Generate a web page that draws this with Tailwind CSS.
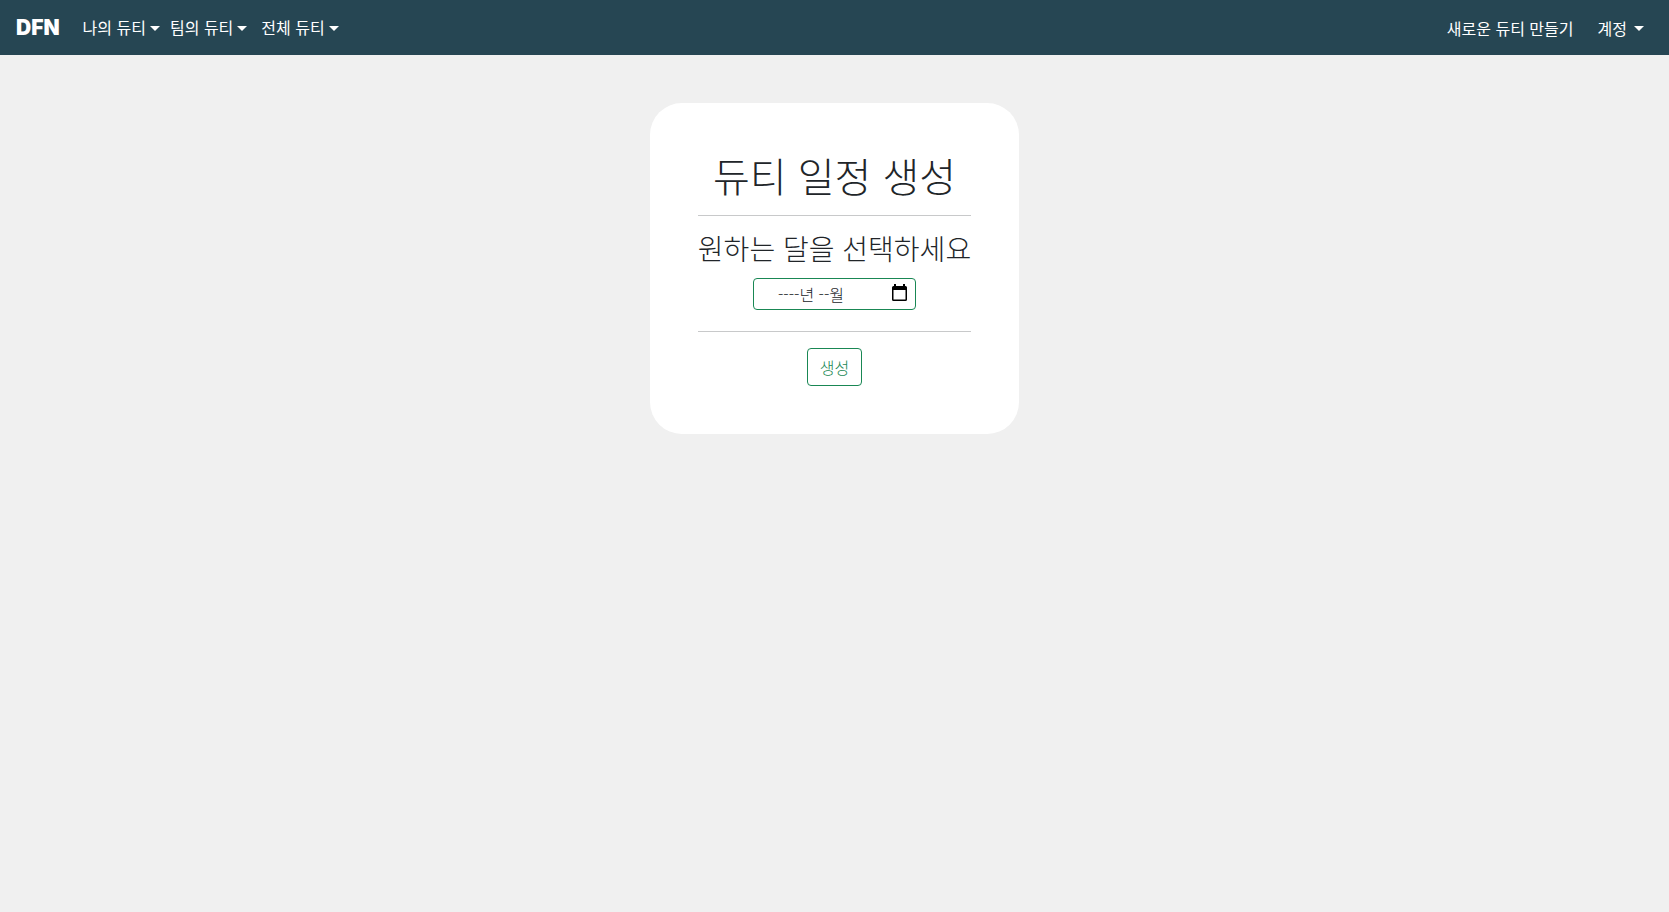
<!DOCTYPE html>
<html lang="ko">
<head>
<meta charset="utf-8">
<meta name="viewport" content="width=device-width, initial-scale=1">
<title>DFN</title>
<script src="https://cdn.jsdelivr.net/npm/@tailwindcss/browser@4"></script>
</head>
<body class="min-h-screen bg-[#f0f0f0] font-['Noto_Sans_CJK_KR',sans-serif] text-base text-[#212529]">
<header class="flex h-[55px] items-center justify-between bg-[#264653] pl-4 pr-[25px] text-white">
  <nav class="flex items-center">
    <a href="#" class="mr-[23px] font-['Inter',sans-serif] text-[21px] font-black">DFN</a>
    <div class="flex items-center pb-0.5">
      <button type="button" class="mr-[10px] flex items-center gap-1">나의 듀티<svg class="mt-1 h-[5px] w-[10px]" viewBox="0 0 10 5" fill="currentColor" aria-hidden="true"><path d="M0 0h10L5 5z"/></svg></button>
      <button type="button" class="mr-[14px] flex items-center gap-1">팀의 듀티<svg class="mt-1 h-[5px] w-[10px]" viewBox="0 0 10 5" fill="currentColor" aria-hidden="true"><path d="M0 0h10L5 5z"/></svg></button>
      <button type="button" class="flex items-center gap-1">전체 듀티<svg class="mt-1 h-[5px] w-[10px]" viewBox="0 0 10 5" fill="currentColor" aria-hidden="true"><path d="M0 0h10L5 5z"/></svg></button>
    </div>
  </nav>
  <nav class="flex items-center gap-6 pt-px">
    <a href="#">새로운 듀티 만들기</a>
    <button type="button" class="flex items-center gap-[7px]">계정<svg class="h-[5px] w-[10px]" viewBox="0 0 10 5" fill="currentColor" aria-hidden="true"><path d="M0 0h10L5 5z"/></svg></button>
  </nav>
</header>
<main class="flex justify-center pt-12">
  <form class="flex flex-col items-center rounded-[32px] bg-white p-12">
    <h1 class="text-[40px] leading-[48px] font-light">듀티 일정 생성</h1>
    <hr class="my-4 w-full border-[#c8c9ca]">
    <label for="month" class="text-[28px] leading-[32px] font-light">원하는 달을 선택하세요</label>
    <div class="mt-[14px] flex h-8 w-[163px] items-center rounded border border-[#198754] pr-2">
      <input id="month" type="text" value="----년 --월" class="min-w-0 flex-1 pl-6 text-base leading-6 font-light outline-none">
      <button type="button" aria-label="달력 열기" class="mb-1"><svg class="h-[17px] w-[15px]" viewBox="0 0 15 17" aria-hidden="true"><path fill="#000" fill-rule="evenodd" d="M2 0h2v2h7V0h2v2h.5A1.5 1.5 0 0 1 15 3.500v12a1.500 1.500 0 0 1-1.500 1.500h-12A1.500 1.500 0 0 1 0 15.500v-12A1.500 1.500 0 0 1 1.500 2H2zM1.500 6v9.500h12V6z"/></svg></button>
    </div>
    <hr class="mt-[21px] mb-4 w-full border-[#c8c9ca]">
    <button type="submit" class="h-[38px] rounded border border-[#198754] px-3 text-base leading-6 font-light text-[#198754]">생성</button>
  </form>
</main>
</body>
</html>
